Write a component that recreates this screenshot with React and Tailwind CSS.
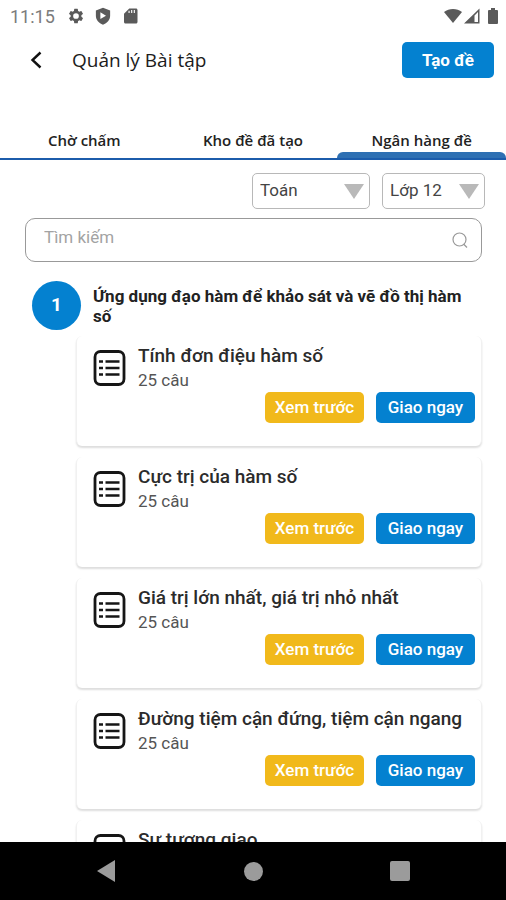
import { useState } from "react";

const TABS = ["Chờ chấm", "Kho đề đã tạo", "Ngân hàng đề"];

const LESSONS = [
    { id: 1, title: "Tính đơn điệu hàm số", count: 25 },
    { id: 2, title: "Cực trị của hàm số", count: 25 },
    { id: 3, title: "Giá trị lớn nhất, giá trị nhỏ nhất", count: 25 },
    { id: 4, title: "Đường tiệm cận đứng, tiệm cận ngang", count: 25 },
    { id: 5, title: "Sự tương giao", count: 25 },
];

function StatusBar() {
    return (
        <div className="flex h-8 shrink-0 items-center justify-between pl-[10px] pr-2 text-[#5a5a5a]">
            <div className="flex items-center gap-[9px]">
                <span className="w-12 text-[18px] text-[#7c7c7c]">11:15</span>
                {/* Settings */}
                <svg viewBox="0 0 24 24" className="h-[18px] w-[18px] fill-current">
                    <path
                        fillRule="evenodd"
                        d="M19.14 12.94c.04-.3.06-.61.06-.94s-.02-.64-.07-.94l2.03-1.58a.49.49 0 0 0 .12-.61l-1.92-3.32a.49.49 0 0 0-.59-.22l-2.39.96a7 7 0 0 0-1.62-.94l-.36-2.54a.48.48 0 0 0-.48-.41h-3.84a.48.48 0 0 0-.47.41l-.36 2.54c-.59.24-1.13.57-1.62.94l-2.39-.96a.48.48 0 0 0-.59.22L2.74 8.87a.48.48 0 0 0 .12.61l2.03 1.58a7.5 7.5 0 0 0 0 1.88l-2.03 1.58a.49.49 0 0 0-.12.61l1.92 3.32c.12.22.37.29.59.22l2.39-.96c.5.38 1.03.7 1.62.94l.36 2.54c.05.24.24.41.48.41h3.84c.24 0 .44-.17.47-.41l.36-2.54a7 7 0 0 0 1.62-.94l2.39.96c.22.08.47 0 .59-.22l1.92-3.32a.48.48 0 0 0-.12-.61zM12 15.8a3.8 3.8 0 1 1 0-7.6 3.8 3.8 0 0 1 0 7.6z"
                    />
                </svg>
                {/* Play Protect */}
                <svg viewBox="0 0 24 24" className="h-[18px] w-[18px] fill-current">
                    <path fillRule="evenodd" d="M12 1 2.5 4.5v7c0 5.5 4 10 9.5 12 5.5-2 9.5-6.500 9.5-12v-7zM8.500 7l7.500 4.500-7.500 4.500z" />
                </svg>
                {/* SD card */}
                <svg viewBox="0 0 24 24" className="h-[18px] w-[18px] fill-current">
                    <path fillRule="evenodd" d="M20 2h-9L4 9v11c0 1.100.9 2 2 2h14c1.100 0 2-.9 2-2V4c0-1.100-.9-2-2-2zM10 5h1.500v3H10zM13.500 4H15v4h-1.500zM17 4h1.500v4H17z" />
                </svg>
            </div>
            <div className="flex items-center">
                <svg viewBox="0 0 18 16" className="h-4 w-[18px] fill-current">
                    <path d="M0 4C5 0 13 0 18 4L9 15z" />
                </svg>
                <svg viewBox="0 0 16 16" className="ml-[2px] h-4 w-4 fill-current">
                    <path fillRule="evenodd" d="M15.500.5v15H0zM14 4l-3.500 3.500V14H14z" />
                </svg>
                <svg viewBox="0 0 10 16" className="ml-2 h-4 w-[10px] fill-current">
                    <path d="M3 0h4v2h2q1 0 1 1v12q0 1-1 1H1q-1 0-1-1V3q0-1 1-1h2z" />
                </svg>
            </div>
        </div>
    );
}

function Header() {
    return (
        <header className="flex h-14 shrink-0 items-center pl-6 pr-3">
            <button aria-label="Quay lại" className="flex h-10 w-12 items-center">
                <svg viewBox="0 0 24 24" className="h-6 w-6" fill="none" stroke="#111" strokeWidth="2.4">
                    <path d="M16.5 4.500 8.500 12l8 7.500" />
                </svg>
            </button>
            <h1 className="flex-1 font-['Open_Sans',sans-serif] text-[19px] font-medium text-[#1c1c1c]">
                Quản lý Bài tập
            </h1>
            <button className="h-9 w-[92px] rounded-[5px] bg-[#0481d0] pt-px text-[17px] font-bold text-white">
                Tạo đề
            </button>
        </header>
    );
}

function Tabs({ active, onChange }) {
    return (
        <nav className="mt-9 flex shrink-0 border-b-2 border-[#1c5cab]" role="tablist">
            {TABS.map((label, i) => (
                <button
                    key={label}
                    role="tab"
                    aria-selected={active === i}
                    onClick={() => onChange(i)}
                    className="flex flex-1 flex-col font-['Open_Sans',sans-serif] text-[15px] font-semibold text-[#222]"
                >
                    <span className="flex h-7 w-full items-end justify-center leading-6">{label}</span>
                    <span
                        className={`h-[6px] w-full rounded-t-md ${active === i ? "bg-[#2e70b3]" : "bg-transparent"}`}
                    />
                </button>
            ))}
        </nav>
    );
}

function Dropdown({ label, options, className }) {
    return (
        <div className={`relative ${className}`}>
            <select
                aria-label={label}
                className="h-9 w-full appearance-none rounded-[5px] border border-[#b8b8b8] bg-white pl-[7px] text-[17px] text-[#444]"
            >
                {options.map((o) => (
                    <option key={o}>{o}</option>
                ))}
            </select>
            <svg viewBox="0 0 20 15" className="pointer-events-none absolute right-[6px] top-[11px] h-[15px] w-5">
                <path d="M0 0h20L10 15z" fill="#b9b9b9" />
            </svg>
        </div>
    );
}

function LessonCard({ lesson }) {
    return (
        <li className="h-[110px] shrink-0 rounded-md border-x border-[#f1f1f1] bg-white pl-4 pr-[6px] pt-2 shadow-[0_2px_2px_#dedede]">
            <div className="flex gap-3">
                <svg viewBox="0 0 33 38" className="mt-[5px] h-[38px] w-[33px]" fill="none" stroke="#161616">
                    <rect x="2" y="2.5" width="29" height="33" rx="5.5" strokeWidth="2.8" />
                    <path d="M12.500 12.500h14M12.500 19h14M12.500 25.500h14" strokeWidth="2.4" />
                    <path d="M6 12.500h4M6 19h4M6 25.500h4" strokeWidth="2.6" />
                </svg>
                <div>
                    <h3 className="text-[19px] font-medium leading-6 text-[#2b2b2b]">{lesson.title}</h3>
                    <p className="text-[17px] leading-6 text-[#555]">{lesson.count} câu</p>
                </div>
            </div>
            <div className="flex justify-end gap-3">
                <button className="h-[31px] w-[99px] rounded-[5px] bg-[#f1b91b] text-[17px] font-medium text-white">
                    Xem trước
                </button>
                <button className="h-[31px] w-[99px] rounded-[5px] bg-[#0481d0] text-[17px] font-medium text-white">
                    Giao ngay
                </button>
            </div>
        </li>
    );
}

function NavBar() {
    return (
        <div className="flex h-[58px] shrink-0 items-center justify-between bg-black px-24">
            <button aria-label="Back" className="flex w-5 justify-center">
                <svg viewBox="0 0 18 22" className="h-[22px] w-[18px] fill-[#9b9b9b]">
                    <path d="M18 0v22L0 11z" />
                </svg>
            </button>
            <button aria-label="Home" className="h-[19px] w-[19px] rounded-full bg-[#9b9b9b]" />
            <button aria-label="Recents" className="h-5 w-5 rounded-[2px] bg-[#9b9b9b]" />
        </div>
    );
}

export default function App() {
    const [tab, setTab] = useState(2);
    const [search, setSearch] = useState("");

    return (
        <div className="flex h-screen flex-col overflow-hidden bg-white font-['Roboto',sans-serif]">
            <StatusBar />
            <Header />
            <Tabs active={tab} onChange={setTab} />

            <main className="flex min-h-0 flex-1 flex-col overflow-hidden pt-[13px]">
                {/* Filters */}
                <div className="flex justify-end gap-3 pr-[21px]">
                    <Dropdown label="Môn học" options={["Toán", "Lý", "Hóa"]} className="w-[118px]" />
                    <Dropdown label="Lớp" options={["Lớp 12", "Lớp 11", "Lớp 10"]} className="w-[103px]" />
                </div>

                <label className="ml-[25px] mr-6 mt-[9px] flex h-11 shrink-0 items-center rounded-[10px] border border-[#999] pl-[18px] pr-[13px]">
                    <input
                        value={search}
                        onChange={(e) => setSearch(e.target.value)}
                        aria-label="Tìm kiếm"
                        placeholder="Tìm kiếm"
                        className="mb-1 min-w-0 flex-1 text-[17px] text-[#333] outline-none placeholder:text-[#a3a3a3]"
                    />
                    <svg viewBox="0 0 16 16" className="h-4 w-4" fill="none" stroke="#999" strokeWidth="1.2">
                        <circle cx="7.5" cy="7.5" r="6.5" />
                        <path d="m11.500 12 3.500 3.500" />
                    </svg>
                </label>

                {/* Chapter */}
                <section className="ml-8 mr-6 mt-[19px]">
                    <div className="flex gap-3">
                        <span className="flex h-[49px] w-[49px] shrink-0 items-center justify-center rounded-full bg-[#0481d0] text-[19px] font-bold text-white">
                            1
                        </span>
                        <h2 className="pt-[5px] text-[17px] font-bold leading-5 text-[#222]">
                            Ứng dụng đạo hàm để khảo sát và vẽ đồ thị hàm số
                        </h2>
                    </div>
                    <ul className="ml-11 mt-[6px] flex flex-col gap-[11px]">
                        {LESSONS.map((l) => (
                            <LessonCard key={l.id} lesson={l} />
                        ))}
                    </ul>
                </section>
            </main>

            <NavBar />
        </div>
    );
}
